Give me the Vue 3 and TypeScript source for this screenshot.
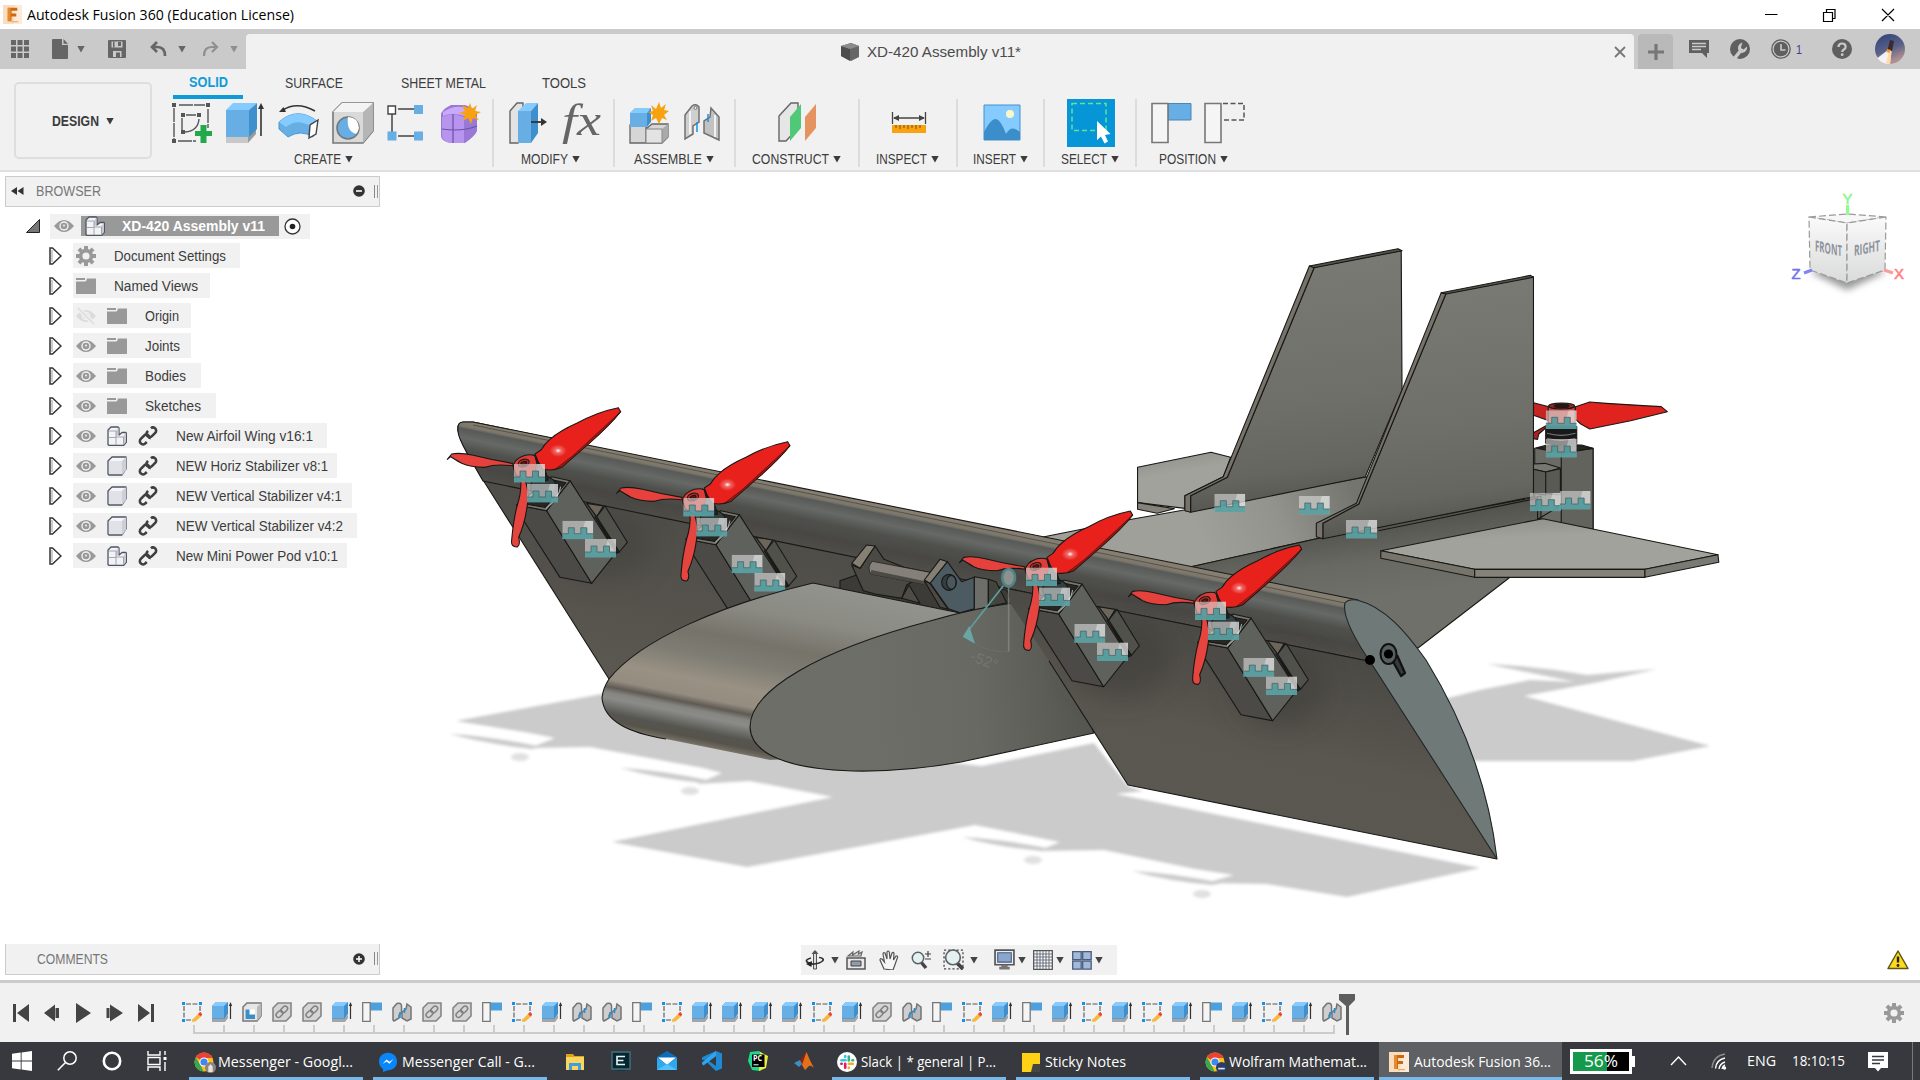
<script setup lang="ts">
import { h } from 'vue'

interface FitProps { text: string; w: number; size?: number; bold?: boolean | string }

// Single line of text condensed or stretched to a given width.
const FitText = (p: FitProps) => {
  const s = p.size ?? 14
  const weight = p.bold !== undefined ? 700 : 400
  return h('svg', { width: p.w, height: Math.round(s * 1.4), style: 'display:block;overflow:visible;flex:none' }, [
    h('text', { x: 0, y: s * 1.06, textLength: p.w, lengthAdjust: 'spacingAndGlyphs', 'font-size': s, 'font-weight': weight, fill: 'currentColor' }, p.text),
  ])
}
FitText.props = ['text', 'w', 'size', 'bold']

const Glyph = (p: { id: string; w?: number; hgt?: number }) =>
  h('svg', { width: p.w ?? 20, height: p.hgt ?? p.w ?? 20, style: 'display:block;flex:none;overflow:visible' }, [h('use', { href: '#' + p.id, width: p.w ?? 20, height: p.hgt ?? p.w ?? 20 })])
Glyph.props = ['id', 'w', 'hgt']

const groups = [
  { name: 'CREATE', w: 335, tw: 47, icons: ['sketch', 'extrude', 'revolve', 'hole', 'pattern', 'form'] },
  { name: 'MODIFY', w: 121, tw: 47, icons: ['press', 'fx'] },
  { name: 'ASSEMBLE', w: 121, tw: 68, icons: ['component', 'joint'] },
  { name: 'CONSTRUCT', w: 124, tw: 77, icons: ['plane'] },
  { name: 'INSPECT', w: 98, tw: 51, icons: ['measure'] },
  { name: 'INSERT', w: 87, tw: 43, icons: ['insert'] },
  { name: 'SELECT', w: 92, tw: 46, icons: ['select'] },
  { name: 'POSITION', w: 121, tw: 57, icons: ['pos1', 'pos2'] },
]

const rows = [
  { text: 'Document Settings', w: 167, tw: 112, icons: ['gear'] },
  { text: 'Named Views', w: 137, tw: 84, icons: ['folder'] },
  { text: 'Origin', w: 118, tw: 34, icons: ['eyeoff', 'folder'] },
  { text: 'Joints', w: 118, tw: 35, icons: ['eye', 'folder'] },
  { text: 'Bodies', w: 128, tw: 41, icons: ['eye', 'folder'] },
  { text: 'Sketches', w: 143, tw: 56, icons: ['eye', 'folder'] },
  { text: 'New Airfoil Wing v16:1', w: 254, tw: 137, icons: ['eye', 'asm', 'link'] },
  { text: 'NEW Horiz Stabilizer v8:1', w: 264, tw: 152, icons: ['eye', 'body', 'link'] },
  { text: 'NEW Vertical Stabilizer v4:1', w: 279, tw: 166, icons: ['eye', 'body', 'link'] },
  { text: 'NEW Vertical Stabilizer v4:2', w: 284, tw: 167, icons: ['eye', 'body', 'link'] },
  { text: 'New Mini Power Pod v10:1', w: 274, tw: 162, icons: ['eye', 'asm', 'link'] },
]

const kinds: Record<string, string> = { S: 't-sketch', E: 't-extrude', X: 't-shell', L: 't-link', P: 't-pos', J: 't-joint' }
const features = 'SEXLLEPJLLPSEJJPSEEEESELJPSEPESESEPESEJ'.split('').map((c) => kinds[c])

const pods = [[0, 0], [169.3, 34], [512, 103.4], [681, 137.4]]
const podJoints = [[514, 464], [527, 484], [562.3, 520.7], [585, 539]]
const tailJoints = [[1214.3, 493.7], [1298.8, 496], [1346, 520], [1545.7, 410.3], [1545.7, 439], [1529.8, 492.7], [1559.6, 491]]
</script>

<template>
  <div class="app">
    <svg class="defs" width="0" height="0">
      <defs>
        <linearGradient id="g-nose" gradientUnits="userSpaceOnUse" x1="0" y1="420" x2="-36.2" y2="600.8">
          <stop offset="0" stop-color="#92938d" /><stop offset=".2" stop-color="#8b8b84" /><stop offset=".38" stop-color="#767369" />
          <stop offset=".5" stop-color="#7e7c73" /><stop offset=".64" stop-color="#999184" /><stop offset=".73" stop-color="#958c80" />
          <stop offset=".77" stop-color="#5f5a53" /><stop offset=".8" stop-color="#858681" /><stop offset=".83" stop-color="#8b8c87" />
          <stop offset=".87" stop-color="#70716c" /><stop offset=".91" stop-color="#565550" /><stop offset=".95" stop-color="#56534b" />
          <stop offset=".98" stop-color="#716c61" /><stop offset="1" stop-color="#958f81" />
        </linearGradient>
        <linearGradient id="g-lead" gradientUnits="userSpaceOnUse" x1="0" y1="326" x2="-11.2" y2="380.8">
          <stop offset="0" stop-color="#857e71" /><stop offset=".1" stop-color="#7b766b" /><stop offset=".14" stop-color="#585a57" />
          <stop offset=".3" stop-color="#666966" /><stop offset=".5" stop-color="#4f504c" /><stop offset=".75" stop-color="#484743" /><stop offset="1" stop-color="#504e49" />
        </linearGradient>
        <linearGradient id="g-wing" gradientUnits="userSpaceOnUse" x1="1180" y1="610" x2="1130" y2="830">
          <stop offset="0" stop-color="#494843" /><stop offset=".5" stop-color="#5a5650" /><stop offset="1" stop-color="#5b5751" />
        </linearGradient>
        <linearGradient id="g-wingl" gradientUnits="userSpaceOnUse" x1="600" y1="500" x2="560" y2="680">
          <stop offset="0" stop-color="#4e4d48" /><stop offset="1" stop-color="#5d5852" />
        </linearGradient>
        <linearGradient id="g-side" gradientUnits="userSpaceOnUse" x1="860" y1="700" x2="1090" y2="680">
          <stop offset="0" stop-color="#6c6e67" /><stop offset=".5" stop-color="#686962" /><stop offset="1" stop-color="#55554f" />
        </linearGradient>
        <linearGradient id="g-fin" x1=".3" y1="0" x2=".4" y2="1">
          <stop offset="0" stop-color="#7a7b75" /><stop offset=".6" stop-color="#6e6f69" /><stop offset=".85" stop-color="#656660" /><stop offset="1" stop-color="#53534e" />
        </linearGradient>
        <linearGradient id="g-deck" gradientUnits="userSpaceOnUse" x1="1200" y1="540" x2="1350" y2="480">
          <stop offset="0" stop-color="#9fa099" /><stop offset=".5" stop-color="#92938c" /><stop offset="1" stop-color="#74756f" />
        </linearGradient>
        <linearGradient id="g-rear" gradientUnits="userSpaceOnUse" x1="1430" y1="515" x2="1440" y2="590">
          <stop offset="0" stop-color="#53534e" /><stop offset=".5" stop-color="#686962" /><stop offset="1" stop-color="#6f7069" />
        </linearGradient>
        <linearGradient id="g-stab" x1="0" y1="0" x2=".3" y2="1"><stop offset="0" stop-color="#8c8d86" /><stop offset=".45" stop-color="#a1a29b" /><stop offset="1" stop-color="#a1a29b" /></linearGradient>
        <radialGradient id="g-blade" cx=".27" cy=".69" r=".1"><stop offset="0" stop-color="#fff" /><stop offset=".35" stop-color="#f26a66" /><stop offset="1" stop-color="#e8211d" /></radialGradient>
        <linearGradient id="g-cube" x1="0" y1="0" x2="0" y2="1"><stop offset="0" stop-color="#fafafa" /><stop offset="1" stop-color="#d9dadb" /></linearGradient>
        <linearGradient id="g-sky" x1="0" y1="0" x2=".4" y2="1"><stop offset="0" stop-color="#2e3f78" /><stop offset=".6" stop-color="#5a6288" /><stop offset="1" stop-color="#b18f90" /></linearGradient>
        <filter id="f-soft" x="-10%" y="-10%" width="120%" height="120%"><feGaussianBlur stdDeviation="1.6" /></filter>
        <filter id="f-dark" x="-50%" y="-50%" width="200%" height="200%"><feGaussianBlur stdDeviation="14" /></filter>
        <filter id="f-cube" x="-50%" y="-100%" width="200%" height="300%"><feGaussianBlur stdDeviation="3.5" /></filter>
      </defs>

      <!-- application and quick-access glyphs -->
      <symbol id="tri" viewBox="0 0 8 8"><path d="M.3 1h7.4L4 7.4z" fill="currentColor" /></symbol>
      <symbol id="fusion" viewBox="0 0 20 20"><path d="M0 0h20v20H0z" fill="#fbdcbc" /><path d="M13 0h7v20h-9z" fill="#fdead8" /><path d="M5 3h10v3H9v3h5v3H9v5H5z" fill="#c96a12" /><path d="M5 3h3v14H5z" fill="#e68a2c" /><path d="M9 17h7v1.2H9z" fill="#f0a860" /></symbol>
      <symbol id="grid9" viewBox="0 0 18 18"><path d="M0 0h5v5H0zM6.500 0h5v5h-5zM13 0h5v5h-5zM0 6.500h5v5H0zM6.500 6.500h5v5h-5zM13 6.500h5v5h-5zM0 13h5v5H0zM6.500 13h5v5h-5zM13 13h5v5h-5z" fill="#666" /></symbol>
      <symbol id="file" viewBox="0 0 18 20"><path d="M1 1q0-1 1-1h9v6h6v13q0 1-1 1H2q-1 0-1-1z" fill="#666" /><path d="M12.500 0 17 4.800H12.500z" fill="#666" /></symbol>
      <symbol id="save" viewBox="0 0 18 18"><path d="M0 1q0-1 1-1h16q1 0 1 1v16q0 1-1 1H1q-1 0-1-1z" fill="#666" /><path d="M3.500 1.500h11v6h-11z" fill="#cacaca" /><path d="M10 2h3v4h-3zM5 1.500h1.500v6H5z" fill="#666" /><path d="M5 11h8.500v6H5z" fill="#cacaca" /><path d="M8 12.500h4v5H8z" fill="#666" /></symbol>
      <symbol id="undo" viewBox="0 0 17 17"><path d="M7 1 2 6l5 5M2.500 6h5q7.500 0 7.500 9" fill="none" stroke="currentColor" stroke-width="2.700" /></symbol>
      <symbol id="redo" viewBox="0 0 17 17"><path d="M10 1l5 5-5 5M14.500 6h-5Q2 6 2 15" fill="none" stroke="currentColor" stroke-width="2.200" /></symbol>
      <symbol id="doccube" viewBox="0 0 20 20"><path d="M1 4 11 1l8 3v11l-8 4-10-5z" fill="#666" /><path d="M1 4l9 3v12l-9-5z" fill="#4d4d4d" /><path d="M1 4 11 1l8 3-9 3z" fill="#8b8b8b" /></symbol>
      <symbol id="chat" viewBox="0 0 20 20"><path d="M0 1h20v13h-2v5l-5-5H0z" fill="#5f5f5f" /><path d="M3 4.500h14M3 7.500h14M3 10.500h9" stroke="#cacaca" stroke-width="1.300" /></symbol>
      <symbol id="wrench" viewBox="0 0 20 20"><circle cx="10" cy="10" r="10" fill="#5f5f5f" /><path d="M4 20 10 12.500" stroke="#cacaca" stroke-width="3.600" /><path d="M12.500 3.500Q7.500 5 8 10l1.500 3.500q5 1.500 7-2.500.8-2 .5-3.500L13.500 10.500 11 9l.5-2.500z" fill="#cacaca" /></symbol>
      <symbol id="clock" viewBox="0 0 20 20"><circle cx="10" cy="10" r="9.200" fill="none" stroke="#5f5f5f" stroke-width="1.300" /><circle cx="10" cy="10" r="7.300" fill="#5f5f5f" /><path d="M10 5v6h4.500" stroke="#cacaca" stroke-width="1.600" fill="none" /></symbol>
      <symbol id="help" viewBox="0 0 20 20"><circle cx="10" cy="10" r="10" fill="#5f5f5f" /><path d="M6.500 8q0-3.500 3.600-3.500T13.600 8q0 1.600-1.700 2.500T10.200 13" fill="none" stroke="#cacaca" stroke-width="2.200" /><circle cx="10.200" cy="15.700" r="1.400" fill="#cacaca" /></symbol>
      <symbol id="avatar" viewBox="0 0 30 30"><circle cx="15" cy="15" r="15" fill="url(#g-sky)" /><path d="M13.500 15.500 2.500 24q4 6 12.500 6L16.500 17z" fill="#fff" opacity=".9" /><path d="M14 18l-3 11 4 1 1.500-12z" fill="#ffd9a8" /><path d="m15 6 4 1-2 10-4.500-1z" fill="#3a2a30" /><path d="m12 15 4 1-1.500 3-3-1z" fill="#ff9a28" /></symbol>

      <!-- ribbon icons, 44 x 48 -->
      <symbol id="sketch" viewBox="0 0 44 48"><g fill="none" stroke="#555" stroke-width="1.400"><path d="M4 9v31M9 6h26M38 10v19M8 42h18" stroke-dasharray="14 1" /><path d="M12 19v12M16 16h10M29 20q-1 12-14 13" /></g><path d="M2 4h4v4H2zM36 4h4v4h-4zM2 40h4v4H2zM11 14h4v4h-4zM27 14h4v4h-4zM11 31h4v4h-4z" fill="#555" /><path d="M30.500 26h6v6H42v5h-5.500v7h-6v-7H25v-5h5.500z" fill="#22a94a" /></symbol>
      <symbol id="extrude" viewBox="0 0 44 48"><path d="M3 37v7h22l8-9v-4z" fill="#9b9b9b" /><path d="M3 37h22v7H3z" fill="#c8c8c8" /><path d="M3 11h23v27H3z" fill="#66aee4" /><path d="M3 11 10 4h24l-8 7z" fill="#86cbff" /><path d="m26 11 8-7v26l-8 8z" fill="#3f8fcd" /><path d="M38 37V9" stroke="#333" stroke-width="1.600" /><path d="m38 4 3 6h-6z" fill="#333" /></symbol>
      <symbol id="revolve" viewBox="0 0 44 48"><path d="M2 23Q20 7 40 22L36 38Q24 30 11 38L2 30z" fill="#66aee4" stroke="#4c97d3" /><path d="M2 23Q20 7 40 22L33 27Q20 19 9 28z" fill="#86cbff" /><path d="m41 21-8 5-1 13 7-4z" fill="#fff" stroke="#444" stroke-width="1.400" /><path d="M6 11Q20 2 38 12" fill="none" stroke="#333" stroke-width="1.600" /><path d="M2 13l4.500-5L9 13z" fill="#333" /></symbol>
      <symbol id="hole" viewBox="0 0 44 48"><path d="M2 13 11 4h31v28L32 44H2z" fill="#d9d9d9" stroke="#777" stroke-width="1.600" /><path d="M32 13 42 4v28L32 44z" fill="#b5b5b5" /><path d="m2 13 9-9h31l-10 9z" fill="#f3f3f3" /><ellipse cx="17" cy="29" rx="11" ry="11" fill="#66aee4" stroke="#777" stroke-width="1.600" /><path d="M17 18q10 0 11 11-1 4-3 6-10-3-8-17z" fill="#fff" /></symbol>
      <symbol id="pattern" viewBox="0 0 44 48"><path d="M8 10v28M14 10h18M14 37h18" stroke="#444" stroke-width="1.500" fill="none" /><path d="M4 7h7.500v8H4z" fill="#fff" stroke="#444" stroke-width="1.400" /><path d="M30 6h9v9h-9zM3.500 32.500h9v9h-9zM30 32.500h9v9h-9z" fill="#66aee4" /></symbol>
      <symbol id="form" viewBox="0 0 44 48"><path d="M3 16q0-5 10-10h14q12 4 12 9v17q-2 5-12 12H12Q3 42 3 37z" fill="#9a78d6" /><path d="M4 18q10-5 22 0v26H12Q4 42 4 36z" fill="#b795ee" /><path d="M4 30q20 3 35-3M15 14v30" stroke="#6d50a8" stroke-width="1.200" fill="none" /><path d="M5 13Q17 5 28 9l-1 8Q14 13 5 17z" fill="#c9a9fa" /><path d="m32 4 2 6 5-4-2 6 6 1-6 3 4 5-6-2-2 6-3-6-5 3 2-6-6-2 6-2-3-6 6 3z" fill="#f7a20e" /></symbol>
      <symbol id="press" viewBox="0 0 44 48"><path d="M4 12 11 4h6v36l-5 4H4z" fill="#e3e3e3" stroke="#666" stroke-width="1.400" /><path d="M12 12h13v32H12z" fill="#66aee4" /><path d="m12 12 8-8h12l-7 8z" fill="#86cbff" /><path d="m25 12 7-8v30l-7 10z" fill="#3f8fcd" /><path d="M25 23h12" stroke="#333" stroke-width="1.800" /><path d="m35 19 6 4-6 4z" fill="#333" /></symbol>
      <symbol id="component" viewBox="0 0 44 48"><path d="M3 26h16v18H3zM19 30l6-5h16v13l-6 6H19z" fill="#d6d6d6" stroke="#666" stroke-width="1.300" /><path d="m35 30 6-5v13l-6 6z" fill="#aaa" /><path d="M19 30h16v14H19z" fill="#e3e3e3" stroke="#888" /><path d="M3 14 8 9h16l-4 5v14H3z" fill="#66aee4" /><path d="M3 14 8 9h16l-4 5z" fill="#86cbff" /><path d="m20 14 4-5v14l-4 5z" fill="#3f8fcd" /><path d="m32 3 2 6 5-4-2 6 5 1-5 4 3 5-5-2-3 6-3-6-5 3 2-6-5-3 5-1-2-6 5 4z" fill="#f7a20e" /></symbol>
      <symbol id="joint" viewBox="0 0 44 48"><path d="M4 16 11 7q4-3 7 1v15l-6 4v8l-8 5z" fill="#cfcfcf" stroke="#707070" stroke-width="1.500" /><path d="M38 41V18l-8-9-1 9-6 4v12z" fill="#c2c2c2" stroke="#707070" stroke-width="1.500" /><path d="M9 12v23M34 16v22" stroke="#f2f2f2" stroke-width="2" /><circle cx="14.500" cy="9" r="1.500" fill="#eee" stroke="#777" /><path d="M16 23v10M27 15v8" stroke="#1b90e0" stroke-width="1.500" /></symbol>
      <symbol id="plane" viewBox="0 0 44 48"><path d="M3 17 15 4h7v25L10 42H3z" fill="#e6e6e6" stroke="#666" stroke-width="1.400" /><path d="M14 18 25 5v24L14 42z" fill="#4fc878" /><path d="M29 18 40 5v24L29 42z" fill="#e59360" /></symbol>
      <symbol id="measure" viewBox="0 0 44 48"><path d="M5.500 13v12M38.500 13v12M7 19h30" stroke="#444" stroke-width="1.300" /><path d="m6 19 6-3v6zM38 19l-6-3v6z" fill="#444" /><path d="M5 26h34v8H5z" fill="#f7a20e" /><path d="M9 26v3m4-3v4m4-4v3m4-3v4m4-4v3m4-3v4m4-4v3" stroke="#7a5208" /></symbol>
      <symbol id="insert" viewBox="0 0 44 48"><path d="M4 6h36v35H4z" fill="#86cbff" stroke="#4291cd" stroke-width="1" /><path d="M4 41V33q7-14 12-13t10 15q5-10 14-2v8z" fill="#3c8ecb" /><circle cx="30" cy="15" r="4" fill="#fbf7cd" /></symbol>
      <symbol id="select" viewBox="0 0 48 48"><path d="M0 0h48v48H0z" fill="#0696d7" /><path d="M5 4.500h34v27H5z" fill="none" stroke="#5fe39a" stroke-width="1.500" stroke-dasharray="5 3" /><path d="M30 22v19l4-3.500 3.500 7 3.500-2-3-6.500 5.500-1z" fill="#fff" /></symbol>
      <symbol id="pos1" viewBox="0 0 44 48"><path d="M18 4.500h23V21H18z" fill="#66aee4" stroke="#4a87b8" /><path d="M2 4.500h16v39H2z" fill="#f5f5f5" stroke="#777" stroke-width="1.600" /></symbol>
      <symbol id="pos2" viewBox="0 0 44 48"><path d="M20 4.500h21V21H20" fill="none" stroke="#555" stroke-width="1.500" stroke-dasharray="5 2.500" /><path d="M2 4.500h16v39H2z" fill="#f5f5f5" stroke="#777" stroke-width="1.600" /></symbol>

      <!-- browser tree icons -->
      <symbol id="eye" viewBox="0 0 20 20"><path d="M0 10Q5 4 10 4t10 6q-5 6-10 6T0 10z" fill="#999" /><circle cx="10" cy="10" r="4.700" fill="#f1f1f1" /><circle cx="10" cy="10" r="3.300" fill="#999" /><circle cx="10" cy="9.500" r="1" fill="#f1f1f1" /></symbol>
      <symbol id="eyeoff" viewBox="0 0 20 20"><path d="M0 10Q5 4 10 4t10 6q-5 6-10 6T0 10z" fill="#dcdcdc" /><circle cx="10" cy="10" r="4.200" fill="#f1f1f1" /><circle cx="10" cy="10" r="2.800" fill="#dcdcdc" /><path d="m2 2 16 16" stroke="#f1f1f1" stroke-width="4" /><path d="m2 2 16 16" stroke="#dcdcdc" stroke-width="1.600" /></symbol>
      <symbol id="folder" viewBox="0 0 20 20"><path d="M0 5.500h9q1.500 0 2-3h9V18H0z" fill="#999" /><path d="M0 2h9v2H0z" fill="#999" /></symbol>
      <symbol id="gear" viewBox="0 0 20 20"><g fill="#999"><path d="M8 0h4v20H8z" /><path d="M8 0h4v20H8z" transform="rotate(45 10 10)" /><path d="M8 0h4v20H8z" transform="rotate(90 10 10)" /><path d="M8 0h4v20H8z" transform="rotate(135 10 10)" /><circle cx="10" cy="10" r="7.200" /></g><circle cx="10" cy="10" r="3.600" fill="#f1f1f1" /></symbol>
      <symbol id="asm" viewBox="0 0 20 20"><path d="M1 4 4 1h7l1 1v7l3-2.500h4l.5 1V16l-3 3.500H2l-1-1z" fill="#f3f3f6" stroke="#4e5563" stroke-width="1.300" stroke-linejoin="round" /><path d="m9 5 2.500-3.500v7L9 11zM16.500 10l2.500-3v9l-2.500 3z" fill="#c6c8d2" /><path d="M1.500 11.500H9V19M9 5v6h7.500v8M2 5h7" fill="none" stroke="#9a9eab" stroke-width=".9" /></symbol>
      <symbol id="body" viewBox="0 0 20 20"><path d="M1 5 5 1h14v12l-4 6H2l-1-1z" fill="#f6f6f9" stroke="#4e5563" stroke-width="1.300" stroke-linejoin="round" /><path d="m15 5 4-4v13l-4 5z" fill="#cdced7" /><path d="M2 5h13v13H2z" fill="#e1e2e8" /></symbol>
      <symbol id="link" viewBox="0 0 20 20"><g fill="none" stroke="#3f3f3f" stroke-width="2.600"><rect x="-5.500" y="-3.200" width="11" height="6.400" rx="3.200" transform="translate(13.300 6.300) rotate(-45)" stroke-dasharray="25 4" stroke-dashoffset="-5" /><rect x="-5.500" y="-3.200" width="11" height="6.400" rx="3.200" transform="translate(6.700 13.500) rotate(-45)" stroke-dasharray="25 4" stroke-dashoffset="12" /></g></symbol>
      <symbol id="expand" viewBox="0 0 13 18"><path d="M1 1h2.500L12 9l-8.500 8H1z" fill="#fff" stroke="#333" stroke-width="1.500" /><path d="M3 3v12" stroke="#bbb" stroke-width="1.500" /></symbol>
      <symbol id="collapse" viewBox="0 0 14 14"><path d="M13.500.5v13H.5z" fill="#777" stroke="#222" /></symbol>

      <!-- timeline icons -->
      <symbol id="t-sketch" viewBox="0 0 20 20"><path d="M2 4v12M4 2h12M18 4v7M4 18h7" fill="none" stroke="#555" stroke-width="1.100" stroke-dasharray="5 1.500" /><path d="M0 0h3v3H0zM17 0h3v3h-3zM0 17h3v3H0z" fill="#1b8fe6" /><path d="m11 17 6-6 2.500 3-6 5.500-3.500.5z" fill="#f8b73e" /><path d="m16 12 2.500-2 2 2.500-2 2z" fill="#ee4336" /></symbol>
      <symbol id="t-extrude" viewBox="0 0 20 20"><path d="M0 16h12l4-3v3l-3 4H0z" fill="#a5a5a5" /><path d="M0 4 4 0h12v12l-4 5H0z" fill="#3f8fcd" /><path d="M0 4h12v12.500H0z" fill="#66aee4" /><path d="m0 4 4-4h12l-4 4z" fill="#86cbff" /><path d="M18.500 17V3" stroke="#333" stroke-width="1.200" /><path d="m18.500 0 1.700 4h-3.400z" fill="#333" /></symbol>
      <symbol id="t-shell" viewBox="0 0 20 20"><path d="M1 5 5 1h14v13l-4 5H1z" fill="#e5e5e5" stroke="#777" stroke-width="1.500" /><path d="m15 5 4-4v13l-4 5z" fill="#b8b8b8" /><path d="M3.500 7.500h9.500V17H3.500z" fill="#fff" /><path d="M3.500 7.500h4v5H13V17H3.500z" fill="#3c8ecb" /></symbol>
      <symbol id="t-link" viewBox="0 0 20 20"><path d="M1 6 6 1h13v13l-5 5H1z" fill="#d5d5d5" stroke="#858585" stroke-width="1.600" /><g fill="none" stroke="#808080" stroke-width="1.500"><rect x="-3.800" y="-2.400" width="7.600" height="4.800" rx="2.400" transform="translate(7.500 12) rotate(-45)" /><rect x="-3.800" y="-2.400" width="7.600" height="4.800" rx="2.400" transform="translate(12.200 7.500) rotate(-45)" /></g></symbol>
      <symbol id="t-pos" viewBox="0 0 20 20"><path d="M8 .5h12v8H8z" fill="#4ea0dc" /><path d="M.7.7h7.500v18.600H.7z" fill="#f5f5f5" stroke="#777" stroke-width="1.300" /></symbol>
      <symbol id="t-joint" viewBox="0 0 20 20"><path d="M1 6 5 1.500q4-1 4.500 2V11L7 13v3l-5 3-1-1z" fill="#cfcfcf" stroke="#747474" stroke-width="1.500" /><path d="M19 17V5l-4-3-1 5-4 3v6l5 3z" fill="#bcbcbc" stroke="#747474" stroke-width="1.500" /><path d="M8 10v6M12.500 6v5" stroke="#1b90e0" stroke-width="1.600" /></symbol>

      <!-- navigation bar icons -->
      <symbol id="orbit" viewBox="0 0 20 20"><path d="M8.500 2h3v17h-3z" fill="#ddd" stroke="#555" /><path d="m10 0 3.500 4h-7z" fill="#555" /><path d="M6 8q-6 1.500-4 4 4 3.500 12 1 5-2 4-4-1-1.500-4-1.500" fill="none" stroke="#333" stroke-width="1.700" /><path d="m7 11-6 3 5.500 3z" fill="#222" /></symbol>
      <symbol id="look" viewBox="0 0 20 20"><path d="M1 8h18v11H1z" fill="#e9e9e9" stroke="#555" stroke-width="1.500" /><path d="M5 11h10v5H5z" fill="#909aab" stroke="#444" /><path d="M2 6 7 2l-.5 3L13 1l-.5 3L16 2l-1 4z" fill="#ddd" stroke="#666" stroke-width="1.200" /></symbol>
      <symbol id="hand" viewBox="0 0 20 20"><path d="M5 19 1 10q0-2 2-1l2.500 3L4 4q0-2 2-1l2 6V2q1-2 2.300 0L11 9l2-6q1.500-1.500 2 .5L14.500 10l2.500-4q2-.5 1.500 1.500L15.500 16 14 20z" fill="#f6f6f6" stroke="#555" stroke-width="1.200" /></symbol>
      <symbol id="zoomi" viewBox="0 0 20 20"><path d="m10 12 5 6" stroke="#444" stroke-width="3.500" /><circle cx="7" cy="8" r="5.700" fill="#e3f1f1" stroke="#5a6068" stroke-width="1.500" /><path d="M14 4h6M17 1v6M14 9h6" stroke="#444" stroke-width="1.200" /></symbol>
      <symbol id="fit" viewBox="0 0 20 20"><path d="M1 1h18v18H1z" fill="none" stroke="#444" stroke-width="1.200" stroke-dasharray="2 2" /><path d="m13 13 6 6" stroke="#444" stroke-width="3.500" /><circle cx="9.500" cy="8" r="7" fill="#e3f1f1" stroke="#5a6068" stroke-width="1.500" /></symbol>
      <symbol id="display" viewBox="0 0 20 20"><path d="M1 1h18v14H1z" fill="#eee" stroke="#555" stroke-width="1.600" /><path d="M3.500 3.500h13v9h-13z" fill="#88a6cf" stroke="#4a5d80" /><path d="M7 15h6v2h2v2.500H5V17h2z" fill="#777" /></symbol>
      <symbol id="gridi" viewBox="0 0 20 20"><path d="M.7.7h18.600v18.600H.7z" fill="#fff" stroke="#555" stroke-width="1.300" /><path d="M1 4h18M1 7h18M1 10h18M1 13h18M1 16h18M4 1v18M7 1v18M10 1v18M13 1v18M16 1v18" stroke="#6f7480" stroke-width="1.100" /></symbol>
      <symbol id="layouti" viewBox="0 0 20 20"><path d="M.7 1.700h8.500v8H.7zm10 0h8.500v8h-8.500zm-10 9.500h8.500v8H.7zm10 0h8.500v8h-8.500z" fill="#a3b9da" stroke="#4a5c7d" stroke-width="1.300" /></symbol>
      <symbol id="jmark" viewBox="0 0 31 18.600"><path d="M0 0h31v18.600H0z" fill="#dcdcdc" opacity=".6" /><path d="M23 0h8v13h-6V7h-4z" fill="#fff" opacity=".35" /><path d="M0 13h6V7h6v6h6.500V7h6v6H31v5.600H0z" fill="#459a9c" opacity=".8" /><path d="M0 13h6V7h6v6h6.500V7h6v6H31" fill="none" stroke="#3f5f5e" stroke-width="1" opacity=".7" /></symbol>

      <!-- taskbar icons -->
      <symbol id="win" viewBox="0 0 20 20"><path d="m0 2.800 8.700-1.200v8H0zM9.600 1.400 20 0v9.600H9.600zM0 10.500h8.700v8L0 17.300zm9.600 0H20V20L9.600 18.600z" fill="#fff" /></symbol>
      <symbol id="search" viewBox="0 0 20 20"><circle cx="13" cy="7" r="6.200" fill="none" stroke="#fff" stroke-width="1.500" /><path d="M8.500 11.500.8 19.200" stroke="#fff" stroke-width="1.600" /></symbol>
      <symbol id="cortana" viewBox="0 0 20 20"><circle cx="10" cy="10" r="8.200" fill="none" stroke="#fff" stroke-width="2.600" /></symbol>
      <symbol id="taskview" viewBox="0 0 20 20"><path d="M1 0v4h12V0M1 20v-4h12v4M1 6.500h12v7H1zM18 0v4M18 11v9" fill="none" stroke="#fff" stroke-width="1.400" /><path d="M16.500 6h3v3h-3z" fill="#fff" /></symbol>
      <symbol id="chrome" viewBox="0 0 20 20"><circle cx="10" cy="10" r="9.500" fill="#fbc116" /><path d="M10 10 1.800 5.200A9.500 9.500 0 0 1 18.300 5.500L18.500 6H10z" fill="#ea4335" /><path d="M1.800 5.200 6.500 13l3 6.500A9.500 9.500 0 0 1 1.800 5.200z" fill="#34a853" /><circle cx="10" cy="10" r="4.600" fill="#fff" /><circle cx="10" cy="10" r="3.600" fill="#4285f4" /></symbol>
      <symbol id="face" viewBox="0 0 10 10"><circle cx="5" cy="5" r="5" fill="#8a8582" /><path d="M3 9V4l2-2 2 2v5z" fill="#e8e2dd" /></symbol>
      <symbol id="face2" viewBox="0 0 10 10"><circle cx="5" cy="5" r="5" fill="#2b3d66" /><path d="M2 6h6" stroke="#dfe5f2" stroke-width="1.500" /></symbol>
      <symbol id="messenger" viewBox="0 0 20 20"><path d="M10 .8c5.300 0 9 3.800 9 8.800s-3.700 8.700-9 8.700L5 20v-3C2.500 15.500 1 13 1 9.600 1 4.600 4.700.8 10 .8z" fill="#0a86fb" /><path d="m4.500 12 4-4.500 3 2.300L15.500 7l-4 4.800-3-2.300z" fill="#fff" /></symbol>
      <symbol id="explorer" viewBox="0 0 20 20"><path d="M1 3h7l1.500 2H19v14H1z" fill="#e0a11d" /><path d="M1 6h18v13H1z" fill="#fbd65e" /><path d="M4 12h12v7h-3v-4H7v4H4z" fill="#3f9de0" /></symbol>
      <symbol id="editor" viewBox="0 0 20 20"><path d="M1 1h18v17H1z" fill="#062630" stroke="#46707a" stroke-width="1.400" /><path d="M14 5.500H6v8h8M6 9.500h6.500" fill="none" stroke="#e5f5f5" stroke-width="1.600" /><path d="M6 19h8v1H6z" fill="#0c3944" /></symbol>
      <symbol id="mail" viewBox="0 0 20 20"><path d="M0 6 10 0l10 6v13H0z" fill="#0f6cbd" /><path d="M1 6.500h18L10 14z" fill="#fff" /><path d="m0 6.500 10 7.500L20 6.500V19H0z" fill="#2fa8ee" /><path d="m0 19 10-6 10 6z" fill="#53c1fb" /></symbol>
      <symbol id="code" viewBox="0 0 20 20"><path d="m14 0 6 2.500v15L14 20 2 8.500l-2 1v-3l1.500-1z" fill="#1f8ad2" /><path d="M14 5 7 10l7 5z" fill="#37393e" /><path d="m0 13 1.500 1.500L14 5V0L0 11.500z" fill="#2fa5ef" /></symbol>
      <symbol id="pycharm" viewBox="0 0 20 20"><path d="m2 1 9-1 8 5-1 9-6 6-8-1L0 10z" fill="#21d789" /><path d="m12 1 8 4-2 12-7 3z" fill="#e8ee44" /><path d="M4 3.500h12.500v12.500H4z" fill="#000" /><path d="M5.500 13.800h5" stroke="#fff" stroke-width="1" /></symbol>
      <symbol id="matlab" viewBox="0 0 20 20"><path d="m0 12 6-3 3 3-4 4z" fill="#3c8fc0" /><path d="m6 9 4-5 2-3 1 5-4 9z" fill="#8a2318" /><path d="M12.500 1q3 8 7.500 16-4-4-6-1l-3 3-3-5z" fill="#e5701a" /></symbol>
      <symbol id="slack" viewBox="0 0 20 20"><circle cx="10" cy="10" r="10" fill="#fff" /><g stroke-width="2.600" stroke-linecap="round"><path d="M4.500 8.200h4" stroke="#36c5f0" /><path d="M8.200 4v1" stroke="#36c5f0" /><path d="M11.800 4.500v4" stroke="#2eb67d" /><path d="M15.500 8.200h.5" stroke="#2eb67d" /><path d="M11.800 11.800h4" stroke="#ecb22e" /><path d="M11.800 15.500v.5" stroke="#ecb22e" /><path d="M8.200 11.800v4" stroke="#e01e5a" /><path d="M4.300 11.800h.4" stroke="#e01e5a" /></g></symbol>
      <symbol id="sticky" viewBox="0 0 20 20"><path d="M1 1h18v11l-7 8H1z" fill="#fcd116" /><path d="M19 12v8h-9l2-8z" fill="#454545" /></symbol>
    </svg>

    <header class="title">
      <Glyph id="fusion" :w="19" />
      <FitText text="Autodesk Fusion 360 (Education License)" :w="267" :size="14" />
      <svg class="winbtns" width="131" height="14" fill="none" stroke="#000" stroke-width="1.200"><path d="M1 6.500h12.500M59.500 4.500h9v9h-9zM62.500 4.500v-3h8.500v9h-2.500M118 1l12 12M130 1l-12 12" /></svg>
    </header>

    <div class="tabs">
      <div class="quick">
        <Glyph id="grid9" :w="18" /><Glyph id="file" :w="18" :hgt="20" class="m22" /><Glyph id="tri" :w="8" class="m8" />
        <Glyph id="save" :w="18" class="m23" /><Glyph id="undo" :w="17" class="m24" /><Glyph id="tri" :w="8" class="m11" />
        <Glyph id="redo" :w="17" class="m16 dim" /><Glyph id="tri" :w="8" class="m11 dim" />
      </div>
      <div class="doc">
        <div class="doctitle"><Glyph id="doccube" :w="20" /><FitText text="XD-420 Assembly v11*" :w="154" :size="15" /></div>
        <svg width="12" height="12" stroke="#777" stroke-width="1.800"><path d="m1 1 10 10M11 1 1 11" /></svg>
      </div>
      <div class="plus"><svg width="16" height="16" stroke="#777" stroke-width="3.200"><path d="M8 0v16M0 8h16" /></svg></div>
      <div class="right">
        <Glyph id="chat" /><Glyph id="wrench" /><Glyph id="clock" /><span class="one"><FitText text="1" :w="6" :size="13" /></span><Glyph id="help" /><Glyph id="avatar" :w="30" />
      </div>
    </div>

    <div class="ribbon">
      <div class="design"><FitText text="DESIGN" :w="47" bold /><Glyph id="tri" :w="8" /></div>
      <div class="tools">
        <nav class="toolnav">
          <span class="t1"><FitText text="SOLID" :w="39" bold /></span>
          <span class="t2"><FitText text="SURFACE" :w="58" /></span>
          <span class="t3"><FitText text="SHEET METAL" :w="85" /></span>
          <span class="t4"><FitText text="TOOLS" :w="44" /></span>
        </nav>
        <div class="groups">
          <section v-for="g in groups" :key="g.name" class="group" :style="{ width: g.w + 'px' }">
            <div class="icons">
              <template v-for="i in g.icons" :key="i">
                <svg v-if="i === 'fx'" class="fxbox" width="44" height="48"><text class="fx" x="2" y="36" textLength="39" lengthAdjust="spacingAndGlyphs">fx</text></svg>
                <Glyph v-else :id="i" :w="i === 'select' ? 48 : 44" :hgt="48" />
              </template>
            </div>
            <div class="glabel"><FitText :text="g.name" :w="g.tw" /><Glyph id="tri" :w="8" /></div>
          </section>
        </div>
      </div>
    </div>

    <main class="canvas">
      <svg class="scene" width="1920" height="808" viewBox="0 172 1920 808" stroke-linejoin="round">
        <g fill="#cbcbcb" filter="url(#f-soft)">
          <path d="M456 721 602 694 780 735 953 763 982 766 1094 743 1128 786 1143 791 1116 794 1480 868 1347 897 1267 884 1206 883 1234 875 1195 869 1104 850 1038 851 1060 842 975 825 900 839 747 867 612 842 833 797 750 781 697 784 722 773 703 768 617 752 590 747 530 748 555 738 530 733z" />
          <path d="M450 734q40 2 92 13l-10 2q-45-5-82-15zM620 768q40 2 92 13l-10 2q-45-5-82-15zM962 837q40 2 90 12l-10 2q-45-4-80-14zM1132 871q40 2 90 12l-10 2q-45-4-80-14z" />
          <path d="M1440 700 1480 690 1530 680 1575 682 1487 664q50 2 100 11l70-6-58 13-75 14 186 50-77 15H1440z" />
          <ellipse cx="520" cy="757" rx="9" ry="4" opacity=".6" /><ellipse cx="690" cy="791" rx="9" ry="4" opacity=".6" /><ellipse cx="1033" cy="860" rx="9" ry="4" opacity=".6" /><ellipse cx="1202" cy="894" rx="9" ry="4" opacity=".6" />
        </g>

        <g class="ink" transform="translate(1100 230) scale(.408163 .333333)">
          <path d="m92 712 180-45 48 15-18 58-94 57v38l-116-17z" fill="url(#g-stab)" />
          <path d="m92 818 90 18-42 14-48-12z" fill="#85827a" />
          <path d="M1065 655 1095 645H1180L1208 655V898L1065 870z" fill="#6a6b65" />
          <path d="M1130 668 1208 655V898L1130 880z" fill="#62635d" />
          <path d="m1062 702 28-2 38 14-36 12-30-8z" fill="#77776f" />
          <path d="M1092 726 1128 716V795L1092 790zM1062 718 1092 726V795L1062 790z" fill="#595a54" />
          <path d="M1090 650Q1130 635 1168 645L1205 655 1130 670 1070 655z" fill="#262624" />
          <path d="M1092 590h76v50q-38 12-76 0z" fill="#191919" />
          <path d="M1095 610q35 12 70 0M1095 625q35 12 70 0" fill="none" stroke="#777" />
          <path d="M1062 518 1100 530 1100 572 1062 556z" fill="#c62522" /><path d="M1062 608 1110 575 1075 612 1072 628 1062 626z" fill="#a22" />
          <path d="M1165 530 1200 516 1240 520 1320 526 1375 530 1390 545 1300 572 1200 597 1178 582 1163 566z" fill="#e0231f" />
          <path d="M1098 530q30-18 66 0v60h-66z" fill="#c84b47" /><ellipse cx="1131" cy="528" rx="32" ry="9" fill="#8b2b28" /><ellipse cx="1131" cy="528" rx="18" ry="5" fill="#2b1515" />
        </g>
        <g class="ink">
          <path d="M1038 538 1133 519 1190 509 1366 477 1405 470 1405 500 1320 538 1190 567 1140 580z" fill="url(#g-deck)" />
          <path d="M1190 567 1320 538 1541 496V520L1509 578 1418 648 1340 640z" fill="url(#g-rear)" />
        </g>
        <g class="ink" transform="translate(1100 230) scale(.408163 .333333)">
          <path d="M525 112 738 62 740 480 650 740 222 847V797L312 742z" fill="url(#g-fin)" />
          <path d="M513 108 525 112 312 742 222 797V847L208 842V797L302 740z" fill="#77736a" />
          <path d="M513 108 730 56 740 62 525 113z" fill="#55534d" />
          <path d="M848 190 1062 140V800L546 926V880L634 822z" fill="url(#g-fin)" />
          <path d="M836 188 848 190 634 822 546 880V926L530 920V880L628 820z" fill="#77736a" />
          <path d="M836 188 1055 136 1062 142 848 192z" fill="#55534d" />
          <path d="M682 902 1072 805" fill="none" /><path d="M1072 800V868L1130 826" fill="none" />
          <path d="M688 962 1085 866 1514 974 1335 1018H918z" fill="url(#g-stab)" />
          <path d="M688 962 918 1018V1042L688 985z" fill="#77746c" /><path d="M918 1018H1335V1042H918z" fill="#85827a" /><path d="M1335 1018 1514 974 1516 997 1335 1042z" fill="#797a74" />
        </g>

        <!-- left wing half -->
        <g class="ink">
          <path d="M458 431Q457 422 463 422H473L1010 533V640L609 679 483 480 467 453z" fill="url(#g-wingl)" />
          <path d="M458 431Q457 422 463 422H473L1358 600 1345 604Q1344 625 1373 662L1010 589 483 481 467 453Q458 437 458 431z" fill="url(#g-lead)" />
          <path d="M473 425 1345 603" fill="none" stroke="#3a3833" stroke-width=".6" />
        </g>
        <ellipse cx="605" cy="545" rx="45" ry="35" fill="#393834" opacity=".35" filter="url(#f-dark)" />

        <template v-for="(p, i) in pods" :key="i">
          <g v-if="i === 2">
            <!-- centre mechanism, fuselage and right wing half: above the left pods, below the right ones -->
            <g class="ink" transform="translate(840 520) scale(.333333)">
              <path d="M0 182 50 165 500 210 520 252 360 282 0 208z" fill="#3c3b37" />
              <path d="M185 235 207 195 240 250z" fill="#4d4c47" />
              <path d="M35 135 60 145 105 78 132 118 250 165 200 195 185 235 105 222 70 212z" fill="#4a4944" /><path d="M35 130 80 75 105 78 60 145z" fill="#857f74" />
              <path d="M97 124Q80 140 92 162L250 192 275 158z" fill="#85817a" stroke-width=".7" /><path d="M94 150 252 183V192L92 162z" fill="#4c4a45" stroke="none" />
              <path d="M253 182 270 190 325 268 300 262z" fill="#4b4a45" />
              <path d="M270 188 322 125 365 185 403 172V266L360 278 325 266z" fill="#4c5b62" /><path d="M253 180 300 118 322 125 270 190z" fill="#857f74" />
              <ellipse cx="327" cy="187" rx="22" ry="24" fill="#333e43" /><ellipse cx="334" cy="187" rx="14" ry="21" fill="#4c575d" />
              <path d="M403 170 445 178V262L403 270z" fill="#6d6e6a" /><path d="M445 178 468 185 500 248 445 260z" fill="#44443f" />
            </g>
            <g class="ink">
              <path d="M609 679C640 640 720 605 813 583L960 613 1013 603 800 758 770 760 666 739C630 733 604 722 602 698Q603 688 609 679z" fill="url(#g-nose)" stroke="none" />
              <path d="M609 679C640 640 720 605 813 583L960 613M666 739C630 733 604 722 602 698Q603 688 609 679" fill="none" />
              <path d="M750 727C750 690 820 650 930 621Q975 608 1013 603L1060 640 1094 733 961 762Q905 772 853 771C790 769 751 755 750 727z" fill="url(#g-side)" />
              <path d="M1010 589 1373 662 1497 859 1128 785 1049 661 1010 603z" fill="url(#g-wing)" stroke="none" />
              <path d="M1049 661 1128 785 1497 859" fill="none" />
              <path d="M1010 589 1373 662" fill="none" />
              <path d="M1345 603Q1348 599 1357 600C1385 607 1406 632 1426 660 1466 725 1489 790 1497 859L1373 666C1353 637 1342 615 1345 603z" fill="#6f7978" stroke="#202526" />
            </g>
            <g fill="#33322f" opacity=".35" filter="url(#f-dark)"><ellipse cx="1120" cy="660" rx="50" ry="40" /><ellipse cx="1280" cy="690" rx="45" ry="38" /></g>
          </g>
          <g :transform="`translate(${p[0]} ${p[1]})`">
            <g class="ink" transform="translate(430 380) scale(.333333)">
              <path d="M470 370 520 378 500 410z" fill="#6b655c" /><path d="M500 410 525 378 592 487 568 516z" fill="#51514c" /><path d="M495 410 568 516 560 520z" fill="#222" />
              <path d="M260 375 350 392 485 610 390 592 280 420z" fill="#4b4a46" />
              <path d="M350 392 420 302 558 518 485 610z" fill="#5f615d" />
              <path d="M260 375 365 290 420 302 350 392z" fill="#77746b" /><path d="M285 372 360 298 408 308 346 382z" fill="#262624" />
              <ellipse cx="340" cy="320" rx="38" ry="32" fill="#33403f" /><path d="M348 385Q385 360 392 320" stroke="#9aa" fill="none" />
              <path d="M310 225 345 270 355 300 330 305 300 290z" fill="#222" />
              <path d="M282 290Q300 340 292 375 285 430 266 472 272 494 262 501 242 502 245 480 250 420 262 375 275 335 272 300z" fill="#e5443f" />
              <path d="M52 238 65 222Q90 217 130 226 185 240 248 250L250 258Q200 250 165 262 120 262 95 250 70 235 62 230z" fill="#e6413d" />
              <path d="M315 222 333 210Q345 190 360 178 390 152 440 130 500 96 565 83L572 95Q540 135 480 188 420 240 395 262 370 274 338 268 322 245 315 222z" fill="url(#g-blade)" />
              <path d="M572 95Q540 135 480 188 420 240 395 262L375 268Q430 230 480 180 540 125 572 95z" fill="#9d1712" stroke-width=".6" />
              <path d="M250 262Q250 238 285 226 305 222 315 228L322 255 310 290 282 300 258 285z" fill="#dc3d38" /><ellipse cx="281" cy="249" rx="17" ry="11" fill="#b02a26" transform="rotate(-20 281 249)" /><ellipse cx="281" cy="250" rx="9" ry="5" fill="#6b1513" transform="rotate(-20 281 249)" />
            </g>
            <use v-for="(m, j) in podJoints" :key="j" href="#jmark" :x="m[0]" :y="m[1]" width="31" height="18.600" />
          </g>
        </template>

        <use v-for="(m, j) in tailJoints" :key="'t' + j" href="#jmark" :x="m[0]" :y="m[1]" width="31" height="18.600" />

        <g transform="translate(840 520) scale(.333333)" fill="none">
          <path d="M506 200V395" stroke="#8b8c88" stroke-width="5" opacity=".7" /><path d="M490 197 388 328" stroke="#5b9fa1" stroke-width="5" />
          <path d="M388 318 405 371 368 350z" fill="#6aa5a6" /><path d="M405 370Q450 398 506 395" stroke="#70716b" stroke-width="2" />
          <ellipse cx="506" cy="173" rx="19" ry="26" fill="#8d9190" stroke="#4f8587" stroke-width="8" />
          <text x="388" y="420" font-size="46" fill="#83847e" opacity=".5" transform="rotate(22 388 420)">-52°</text>
        </g>
        <circle cx="1370" cy="660" r="5" fill="#000" />
        <path d="m1391 658 10 18 4-3-8-18" fill="#333b3b" stroke="#111" stroke-width="2.200" /><ellipse cx="1388.500" cy="654" rx="8" ry="10" fill="#57605f" stroke="#111" stroke-width="2" /><circle cx="1388.500" cy="654" r="4.600" fill="#000" />

        <!-- view cube -->
        <path d="M1810 272 1847 290 1886 272 1847 262z" fill="#999" filter="url(#f-cube)" />
        <g stroke="#9a9a9a" stroke-width="1.200" stroke-dasharray="7 3"><path d="M1809 217 1848 214 1886 217 1847 223z" fill="#f7f7f7" /><path d="M1809 217 1847 223V283L1810 270z" fill="url(#g-cube)" /><path d="M1886 217 1847 223V283L1885 270z" fill="url(#g-cube)" /></g>
        <g font-size="15" font-weight="700" fill="#8d949d" font-family="Open Sans, sans-serif">
          <text transform="matrix(1 .2 0 1 1815 251)" textLength="27" lengthAdjust="spacingAndGlyphs">FRONT</text><text transform="matrix(1 -.2 0 1 1854 256)" textLength="26" lengthAdjust="spacingAndGlyphs">RIGHT</text>
        </g>
        <g stroke-width="3"><path d="M1847.500 205v10" stroke="#8cff8c" /><path d="m1812 270-8 3" stroke="#8282f5" /><path d="m1884 270 9 3" stroke="#ff9a9a" /></g>
        <g font-size="15" stroke-width=".5"><text x="1842.500" y="204" fill="#8cf58c" stroke="#8cf58c">Y</text><text x="1791.500" y="279" fill="#7070f0" stroke="#7070f0">Z</text><text x="1894" y="279" fill="#ff7f7f" stroke="#ff7f7f">X</text></g>
      </svg>

      <aside class="panels">
        <div class="panelhead">
          <svg width="13" height="8"><path d="M6 0v8L0 4zM12.500 0v8l-6-4z" fill="#333" /></svg>
          <FitText text="BROWSER" :w="65" /><i class="grow" />
          <svg width="12" height="12"><circle cx="6" cy="6" r="5.800" fill="#333" /><path d="M3 6h6" stroke="#fff" stroke-width="1.600" /></svg><b class="grip" />
        </div>
        <div class="root">
          <Glyph id="collapse" :w="14" />
          <div class="rootbg"><Glyph id="eye" :w="20" /><div class="rootsel"><Glyph id="asm" :w="20" /><FitText text="XD-420 Assembly v11" :w="143" bold /></div>
            <svg width="17" height="17"><circle cx="8.500" cy="8.500" r="7.500" fill="#fff" stroke="#333" stroke-width="1.300" /><circle cx="8.500" cy="8.500" r="2.800" fill="#222" /></svg></div>
        </div>
        <div v-for="r in rows" :key="r.text" class="row">
          <Glyph id="expand" :w="13" :hgt="18" />
          <div class="rowbg" :style="{ width: r.w + 'px' }"><Glyph v-for="i in r.icons" :id="i" :key="i" /><FitText class="rtext" :text="r.text" :w="r.tw" :size="14" /></div>
        </div>
      </aside>

      <div class="bottom">
        <div class="panelhead comments"><FitText text="COMMENTS" :w="71" /><i class="grow" />
          <svg width="12" height="12"><circle cx="6" cy="6" r="5.800" fill="#333" /><path d="M3 6h6M6 3v6" stroke="#fff" stroke-width="1.500" /></svg><b class="grip" /></div>
        <div class="navbar">
          <Glyph id="orbit" /><Glyph id="tri" :w="8" class="m6" /><Glyph id="look" class="m7" /><Glyph id="hand" class="m13" /><Glyph id="zoomi" class="m12" /><Glyph id="fit" class="m12" :w="21" /><Glyph id="tri" :w="8" class="m6" />
          <Glyph id="display" class="m16" :w="21" /><Glyph id="tri" :w="8" class="m3" /><Glyph id="gridi" class="m7" /><Glyph id="tri" :w="8" class="m3" /><Glyph id="layouti" class="m8" /><Glyph id="tri" :w="8" class="m3" />
        </div>
        <svg class="warn" width="22" height="20"><path d="M11 1 21 18.500H1z" fill="#ffd91c" stroke="#5c5618" stroke-width="1.500" stroke-linejoin="round" /><path d="M11 6.500v6" stroke="#222" stroke-width="2.400" /><circle cx="11" cy="15.500" r="1.400" fill="#222" /></svg>
      </div>
    </main>

    <div class="timeline">
      <svg class="play" width="142" height="20" fill="#444"><path d="M0 1h3v18H0zM4 10 16 1v18zM31 10 42 1.500v17zM42.500 5h3.500v10h-3.500zM63 0v20L78 10zM93.500 5h3v10h-3zM97 1.500v17L110 10zM125 1v18l12-9zM138 1h3v18h-3z" /></svg>
      <div class="features"><div v-for="(f, i) in features" :key="i" class="feat"><Glyph :id="f" /></div></div>
      <svg class="marker" width="16" height="41" fill="#5d5d5d"><path d="M0 0h16v6l-6 6v29H7V12L0 6z" /></svg>
      <Glyph id="gear" class="cog" />
    </div>

    <footer class="taskbar">
      <div class="sys"><Glyph id="win" /><Glyph id="search" /><Glyph id="cortana" /><Glyph id="taskview" /></div>
      <div class="task"><span class="badge"><Glyph id="chrome" /><Glyph id="face" :w="11" class="mini" /></span><FitText text="Messenger - Googl..." :w="135" :size="14.500" /></div>
      <div class="task g10"><Glyph id="messenger" /><FitText text="Messenger Call - G..." :w="133" :size="14.500" /></div>
      <div class="apps"><Glyph id="explorer" /><Glyph id="editor" /><Glyph id="mail" /><Glyph id="code" /><span class="badge"><Glyph id="pycharm" /><FitText class="pc" text="PC" :w="9" :size="8" bold /></span><Glyph id="matlab" /></div>
      <div class="task g18"><Glyph id="slack" /><FitText text="Slack | * general | P..." :w="135" :size="14.500" /></div>
      <div class="task g10"><Glyph id="sticky" /><FitText text="Sticky Notes" :w="81" :size="14.500" /></div>
      <div class="task g10"><span class="badge"><Glyph id="chrome" /><Glyph id="face2" :w="11" class="mini" /></span><FitText text="Wolfram Mathemat..." :w="138" :size="14.500" /></div>
      <div class="task active"><Glyph id="fusion" /><FitText text="Autodesk Fusion 36..." :w="137" :size="14.500" /></div>
      <div class="battery"><div class="level"><FitText text="56%" :w="34" :size="16" /></div></div>
      <svg class="chev" width="17" height="10" fill="none" stroke="#fff" stroke-width="1.400"><path d="m1 9 7.500-8L16 9" /></svg>
      <svg class="wifi" width="17" height="17" fill="none" stroke-width="1.400"><path d="M1 15Q2 3 14 1" stroke="#8b8c8e" /><path d="M4.500 15.500Q5 7 14 5M8 16q.5-5 6-7M11 16q.5-3 3-4" stroke="#fff" /><circle cx="13.500" cy="15" r="1.700" fill="#fff" /></svg>
      <div class="lang"><FitText text="ENG" :w="29" :size="14.500" /></div>
      <div class="time"><FitText text="18:10:15" :w="53" :size="14.500" /></div>
      <svg class="notif" width="20" height="21"><path d="M0 1h20v16h-7l-3 3.500L7 17H0z" fill="#fff" /><path d="M4 5.500h12M4 9h12M4 12.500h8" stroke="#37393e" stroke-width="1.300" /></svg>
      <i class="edge" />
    </footer>
  </div>
</template>

<style>
body { margin: 0; overflow: hidden; background: #fff; }
</style>

<style scoped>
.app { width: 1920px; height: 1080px; display: flex; flex-direction: column; font-family: "Liberation Sans", Arial, sans-serif; color: #3c3c3c; background: #fff; overflow: hidden; }
.defs { position: absolute; }
.grow { flex: 1; }
.m3 { margin-left: 3px; } .m6 { margin-left: 6px; } .m7 { margin-left: 7px; } .m8 { margin-left: 8px; } .m11 { margin-left: 11px; } .m12 { margin-left: 12px; } .m13 { margin-left: 13px; } .m16 { margin-left: 16px; } .m22 { margin-left: 22px; } .m23 { margin-left: 23px; } .m24 { margin-left: 24px; }

.title { height: 29px; flex: none; display: flex; align-items: center; padding-left: 3px; gap: 5px; color: #000; font-family: "Open Sans", "Noto Sans", sans-serif; }
.winbtns { margin-left: auto; margin-right: 25px; }

.tabs { height: 40px; flex: none; display: flex; background: #cacaca; }
.quick { width: 246px; box-sizing: border-box; padding-left: 11px; display: flex; align-items: center; color: #666; }
.quick .dim { color: #8f8f8f; }
.doc { width: 1388px; margin-top: 5px; background: #f1f1f1; border-radius: 4px 4px 0 0; display: flex; align-items: center; box-sizing: border-box; padding-right: 8px; }
.doctitle { flex: 1; display: flex; gap: 7px; padding-left: 594px; align-items: center; color: #4b4b4b; }
.plus { width: 35px; margin: 5px 0 0 4px; background: #b9b9b9; border-radius: 4px 4px 0 0; display: flex; align-items: center; justify-content: center; }
.right { flex: 1; display: flex; align-items: center; padding-left: 16px; gap: 21px; }
.one { margin: 0 9px 0 -16px; color: #44408a; }
.one + svg { margin-right: 2px; }

.ribbon { height: 103px; box-sizing: border-box; flex: none; display: flex; background: #f1f1f1; border-bottom: 2px solid #dfdfdf; }
.design { width: 138px; height: 77px; box-sizing: border-box; margin: 13px 0 0 14px; border: 2px solid #dedede; border-radius: 5px; display: flex; align-items: center; justify-content: center; gap: 7px; }
.tools { margin-left: 5px; }
.toolnav { height: 30px; display: flex; align-items: stretch; }
.toolnav span { display: flex; align-items: center; padding-bottom: 3px; box-sizing: border-box; }
.t1 { width: 70px; margin-left: 16px; justify-content: center; color: #0f9bd8; border-bottom: 4px solid #0f9bd8; }
.toolnav .t1 { padding: 0; }
.t2 { margin-left: 42px; } .t3 { margin-left: 58px; } .t4 { margin-left: 56px; }
.groups { display: flex; }
.group { height: 68px; box-sizing: border-box; }
.group + .group { border-left: 2px solid #dcdcdc; }
.icons { display: flex; justify-content: center; gap: 9.700px; height: 48px; padding-left: 2.500px; }
.fxbox { overflow: visible; }
.fx { font: italic 44px "Liberation Serif", serif; fill: #666; }
.glabel { display: flex; justify-content: center; align-items: center; gap: 4px; height: 23px; padding-right: 1px; }
.group:first-child .glabel { padding-right: 3px; }
.group:nth-child(2) .glabel, .group:last-child .glabel { padding-right: 6px; }
.group:last-child .icons { padding-left: 4px; }

.canvas { height: 808px; flex: none; position: relative; display: flex; flex-direction: column; justify-content: space-between; }
.scene { position: absolute; left: 0; top: 0; }
.ink path, .ink ellipse { vector-effect: non-scaling-stroke; }
.ink { stroke: #181816; stroke-width: 1.1; }
.panels { position: relative; padding: 4px 0 0 5px; }
.panelhead { width: 375px; height: 31px; box-sizing: border-box; border: 1.500px solid #cbcbcb; background: #f1f1f1; display: flex; align-items: center; padding: 0 1.500px 1px 5px; gap: 12px; color: #777; }
.panelhead.comments { border-top: 0; padding-left: 30.500px; height: 31px; }
.grip { width: 2px; height: 13px; border-left: 1.500px solid #888; border-right: 1.500px solid #999; margin-left: -3px; }
.root { display: flex; align-items: center; height: 26px; margin: 6px 0 0 21px; gap: 10px; }
.rootbg { height: 25px; width: 260px; display: flex; align-items: center; background: #f1f1f1; box-sizing: border-box; padding-left: 4px; gap: 5px; }
.rootsel { height: 20px; width: 198px; margin-left: 2px; background: #999; display: flex; align-items: center; padding-left: 4px; box-sizing: border-box; gap: 17px; color: #fff; }
.row { display: flex; align-items: center; height: 25px; margin: 5px 0 0 44px; gap: 11px; }
.root + .row { margin-top: 4px; }
.rowbg { height: 25px; background: #f1f1f1; display: flex; align-items: center; box-sizing: border-box; padding-left: 3px; gap: 11px; }
.rtext { margin-left: 7px; }
.bottom { position: relative; display: flex; align-items: center; height: 31px; margin: 0 0 5px 5px; }
.navbar { margin-left: 421px; width: 316px; height: 30px; box-sizing: border-box; background: #f1f1f1; padding-left: 4px; display: flex; align-items: center; color: #444; }
.warn { margin: 0 11px 0 auto; }

.timeline { height: 62px; box-sizing: border-box; flex: none; background: #f1f1f1; border-top: 3px solid #cbcbcb; display: flex; }
.play { margin: 20px 0 0 13px; }
.features { display: flex; margin: 19px 0 0 24px; }
.feat { width: 30px; height: 32px; box-sizing: border-box; padding-left: 3px; border-bottom: 2px solid #cbcbcb; background: linear-gradient(#cbcbcb, #cbcbcb) 14px 23px / 2px 9px no-repeat; }
.feat:first-child { border-image: linear-gradient(90deg, transparent 14px, #cbcbcb 14px) 2; border-style: solid; border-width: 0 0 2px; }
.feat:last-child { width: 16px; }
.marker { margin: 11px 0 0 4px; position: relative; }
.cog { margin: 20px 16px 0 auto; }

.taskbar { height: 38px; flex: none; display: flex; align-items: center; background: #37393e; color: #fff; font-family: "Open Sans", "Noto Sans", sans-serif; }
.sys { display: flex; gap: 25px; padding-left: 12px; width: 177px; box-sizing: border-box; }
.task { width: 174px; height: 38px; margin-left: 12px; box-sizing: border-box; border-bottom: 3px solid #76b9ed; display: flex; align-items: center; padding: 4px 0 0 5px; gap: 4px; }
.task.g10 { margin-left: 10px; } .task.g18 { margin-left: 18px; }
.task.active { margin-left: 5px; width: 183px; background: #5e6063; padding-left: 10px; gap: 5px; }
.apps { display: flex; gap: 25.800px; margin-left: 18px; }
.badge { position: relative; }
.mini { position: absolute; right: -2px; bottom: -1px; }
.pc { position: absolute; left: 5px; top: 2px; }
.battery { position: relative; margin-left: 8px; width: 62px; height: 25px; box-sizing: border-box; background: #fff; padding: 3px; }
.battery::after { content: ""; position: absolute; right: -3px; top: 7px; width: 3px; height: 11px; background: #fff; }
.level { height: 19px; display: flex; align-items: center; justify-content: center; background: linear-gradient(90deg, #159a4b 60%, #000 60%); }
.chev { margin-left: 38px; } .wifi { margin-left: 24px; } .lang { margin-left: 19px; } .time { margin-left: 16px; }
.notif { margin-left: 23px; } .edge { width: 1px; height: 38px; background: #77787b; margin-left: 24px; }
</style>
